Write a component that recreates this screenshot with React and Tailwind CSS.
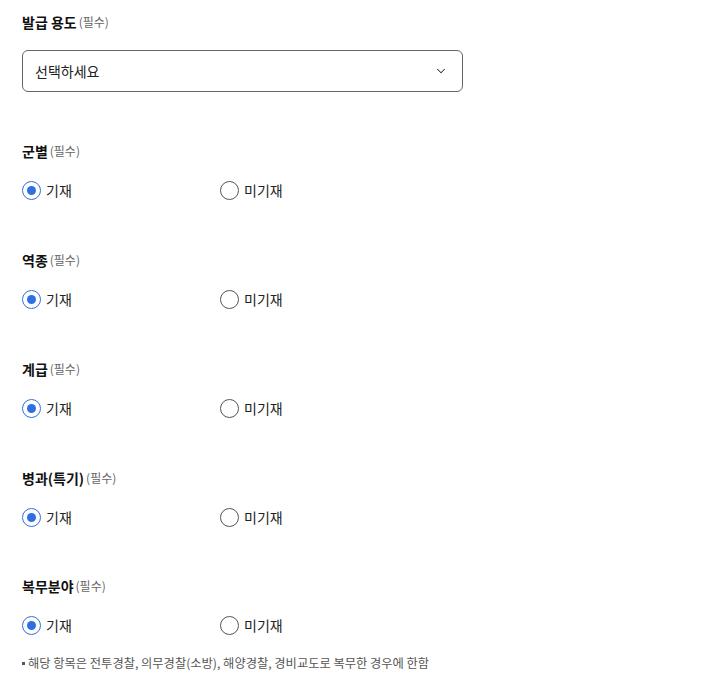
import { ChevronDown } from 'lucide-react';

const sections = ['군별', '역종', '계급', '병과(특기)', '복무분야'];

function Radio({ checked, label }) {
  return (
    <label className="flex items-center w-[198px] h-5 cursor-pointer">
      {checked ? (
        <span className="w-[19px] h-[19px] rounded-full border-[1.5px] border-[#2f6fe4] flex items-center justify-center">
          <span className="w-[9px] h-[9px] rounded-full bg-[#2f6fe4]" />
        </span>
      ) : (
        <span className="w-[19px] h-[19px] rounded-full border-[1.5px] border-[#555]" />
      )}
      <span className="ml-[5px] text-[14px] text-[#222]">{label}</span>
    </label>
  );
}

function Label({ title }) {
  return (
    <div className="h-5 flex items-center">
      <span className="text-[14px] font-bold text-[#111]">{title}</span>
      <span className="ml-[2px] text-[12px] text-[#666]">(필수)</span>
    </div>
  );
}

export default function App() {
  return (
    <div
      className="min-h-screen bg-white pl-[22px] pt-[12px]"
      style={{ fontFamily: '"Noto Sans CJK KR", "Noto Sans", sans-serif' }}
    >
      <Label title="발급 용도" />
      <div className="mt-[18px] w-[441px] h-[42px] border border-[#666] rounded-md flex items-center justify-between pl-[12px] pr-[14px]">
        <span className="text-[14px] text-[#222]">선택하세요</span>
        <ChevronDown className="w-[14px] h-[14px] text-[#333]" strokeWidth={1.75} />
      </div>

      {sections.map((title, i) => (
        <div key={i} className={i === 0 || i === 4 ? 'mt-[49px]' : 'mt-[50px]'}>
          <Label title={title} />
          <div className="mt-[19px] flex">
            <Radio checked label="기재" />
            <Radio label="미기재" />
          </div>
        </div>
      ))}

      <p className="mt-[18px] h-5 flex items-center text-[12.25px] text-[#555]">
        <span className="w-[3px] h-[3px] bg-[#555] mr-[3px]" />
        해당 항목은 전투경찰, 의무경찰(소방), 해양경찰, 경비교도로 복무한 경우에 한함
      </p>
    </div>
  );
}
